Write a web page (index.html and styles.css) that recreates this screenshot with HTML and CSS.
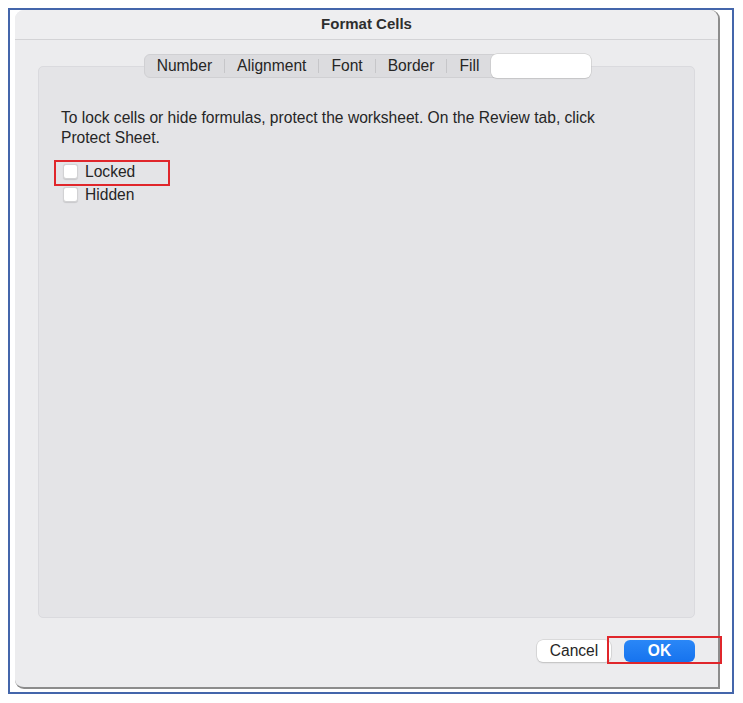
FILE: index.html
```html
<!DOCTYPE html>
<html>
<head>
<meta charset="utf-8">
<link rel="stylesheet" href="styles.css">
</head>
<body>
<div class="frame">
  <div class="dialog">
    <div class="titlebar">Format Cells</div>
    <div class="content">
      <div class="tabs">
        <span class="tab">Number</span>
        <span class="sep"></span>
        <span class="tab">Alignment</span>
        <span class="sep"></span>
        <span class="tab">Font</span>
        <span class="sep"></span>
        <span class="tab">Border</span>
        <span class="sep"></span>
        <span class="tab">Fill</span>
        <span class="tab selected"></span>
      </div>
      <div class="panel">
        <p class="info">To lock cells or hide formulas, protect the worksheet. On the Review tab, click Protect Sheet.</p>
        <div class="options">
          <label class="option highlighted"><span class="box"></span>Locked</label>
          <label class="option"><span class="box"></span>Hidden</label>
        </div>
      </div>
      <div class="buttons">
        <button class="btn cancel">Cancel</button>
        <button class="btn ok">OK</button>
      </div>
    </div>
  </div>
</div>
</body>
</html>
```

FILE: styles.css
```css
*, *::before, *::after { box-sizing: border-box; }
html, body { margin: 0; padding: 0; background: #ffffff; }
body {
  font-family: "Liberation Sans", Arial, sans-serif;
  color: #262626;
  font-size: 15.6px;
}
.frame {
  margin: 8px 0 0 8px;
  width: 726px;
  height: 686px;
  border: 2px solid #4466ab;
  padding: 0 0 0 5px;
}
.dialog {
  width: 705px;
  height: 679px;
  background: #ececee;
  border-radius: 9px 9px 0 9px;
  border-right: 2px solid #8c8c8c;
  border-bottom: 2px solid #8c8c8c;
  display: flex;
  flex-direction: column;
}
.titlebar {
  height: 30px;
  border-bottom: 1px solid #d3d3d6;
  background: #eeeef0;
  border-radius: 9px 9px 0 0;
  text-align: center;
  font-weight: bold;
  font-size: 15px;
  line-height: 28px;
  color: #2e2e2e;
}
.content {
  flex: 1;
  padding: 14px 23px 0 23px;
  display: flex;
  flex-direction: column;
}
.tabs {
  align-self: center;
  position: relative;
  z-index: 1;
  display: flex;
  align-items: center;
  height: 24px;
  background: #dcdcdf;
  border: 1px solid #d0d0d3;
  border-radius: 6px;
  margin-left: 2px;
}
.tab {
  padding: 0 12px;
  line-height: 22px;
  color: #262626;
}
.sep {
  width: 1px;
  height: 14px;
  background: #c6c6c9;
}
.tab.selected {
  width: 100px;
  height: 24px;
  margin: -1px -1px -1px 0;
  background: #ffffff;
  border-radius: 6px;
  box-shadow: 0 0 0 0.5px #c4c4c4, 0 1px 1px rgba(0,0,0,0.12);
}
.panel {
  margin-top: -12px;
  height: 552px;
  background: #e4e4e7;
  border: 1px solid #dadade;
  border-radius: 5px;
  padding: 41px 22px 0 22px;
}
.info {
  margin: 0;
  line-height: 20px;
  width: 580px;
}
.options {
  margin-top: 12px;
  display: flex;
  flex-direction: column;
}
.option {
  position: relative;
  display: flex;
  align-items: center;
  height: 23px;
  gap: 7px;
}
.box {
  width: 15px;
  height: 15px;
  margin-left: 2px;
  background: #ffffff;
  border: 1px solid #d2d2d4;
  border-radius: 3px;
  box-shadow: 0 0.5px 1px rgba(0,0,0,0.12);
}
.option.highlighted::after {
  content: "";
  position: absolute;
  left: -7px;
  top: 0px;
  width: 116px;
  height: 26px;
  border: 2px solid #e0262b;
}
.buttons {
  display: flex;
  justify-content: flex-end;
  gap: 13px;
  margin-top: 22px;
}
.btn {
  font-family: "Liberation Sans", Arial, sans-serif;
  font-size: 15.6px;
  height: 22px;
  border-radius: 6px;
  border: none;
  padding: 0;
  line-height: 22px;
}
.cancel {
  width: 74px;
  background: #ffffff;
  color: #262626;
  box-shadow: 0 0 0 0.5px #c8c8c8, 0 1px 1.5px rgba(0,0,0,0.2);
}
.ok {
  position: relative;
  width: 71px;
  background: linear-gradient(#2a87f7, #1673ee);
  color: #ffffff;
  font-weight: bold;
}
.ok::after {
  content: "";
  position: absolute;
  left: -17px;
  top: -4px;
  width: 115px;
  height: 28px;
  border: 2px solid #e0262b;
}
```
